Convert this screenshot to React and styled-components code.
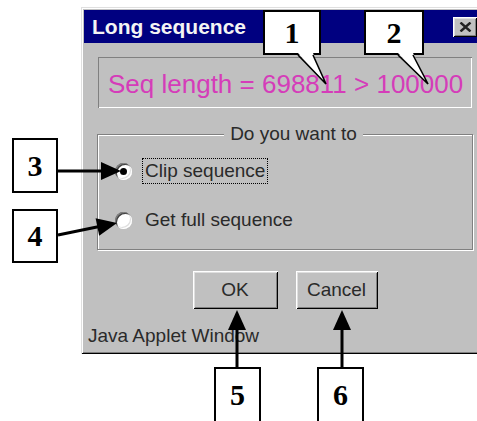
import styled, { createGlobalStyle } from "styled-components";

const GlobalStyle = createGlobalStyle`
  body {
    margin: 0;
    background: #fff;
  }
`;

const raised = `
  box-shadow: inset 1px 1px 0 #fff, inset -1px -1px 0 #000,
    inset 2px 2px 0 #dfdfdf, inset -2px -2px 0 #808080;
`;

const Arrow = ({ from, to, head = 20, half = 9 }) => {
  const dx = to[0] - from[0];
  const dy = to[1] - from[1];
  const len = Math.sqrt(dx * dx + dy * dy);
  const angle = (Math.atan2(dy, dx) * 180) / Math.PI;
  return (
    <g transform={`translate(${to[0]} ${to[1]}) rotate(${angle})`}>
      <line x1={-len} y1="0" x2={-head + 2} y2="0" stroke="#000" strokeWidth="3" />
      <polygon points={`0,0 ${-head},${-half} ${-head},${half}`} fill="#000" />
    </g>
  );
};

const Tail = ({ left, right, tip, y }) => (
  <g>
    <polygon points={`${left},${y - 2} ${right},${y - 2} ${tip[0]},${tip[1]}`} fill="#fff" />
    <polyline
      points={`${left},${y} ${tip[0]},${tip[1]} ${right},${y}`}
      fill="none"
      stroke="#000"
      strokeWidth="1.6"
    />
  </g>
);

const App = () => {
  return (
    <Page>
      <GlobalStyle />
      <Window>
        <TitleBar>
          <Title>Long sequence</Title>
          <CloseButton>
            <svg width="13" height="10" viewBox="0 0 13 10">
              <path d="M1.5 0.5 L11.5 9.5 M11.5 0.5 L1.5 9.5" stroke="#222" strokeWidth="2.4" />
            </svg>
          </CloseButton>
        </TitleBar>
        <Body>
          <MessageField>Seq length = 698811 &gt; 100000</MessageField>
          <Group>
            <Legend>Do you want to</Legend>
            <Options>
              <Option>
                <Radio $checked />
                <OptionLabel $focused>Clip sequence</OptionLabel>
              </Option>
              <Option>
                <Radio />
                <OptionLabel>Get full sequence</OptionLabel>
              </Option>
            </Options>
          </Group>
          <ButtonRow>
            <Button $w={85}>OK</Button>
            <Button $w={82}>Cancel</Button>
          </ButtonRow>
          <Footer>Java Applet Window</Footer>
        </Body>
      </Window>

      <Callout $x={263} $y={10} $w={58} $h={45}>1</Callout>
      <Callout $x={364} $y={10} $w={60} $h={45}>2</Callout>
      <Callout $x={12} $y={138} $w={46} $h={55}>3</Callout>
      <Callout $x={12} $y={209} $w={46} $h={54}>4</Callout>
      <Callout $x={214} $y={367} $w={47} $h={56}>5</Callout>
      <Callout $x={317} $y={367} $w={47} $h={56}>6</Callout>

      <Marks width="477" height="421" viewBox="0 0 477 421">
        <Tail left={298} right={313} tip={[326, 84]} y={55} />
        <Tail left={398} right={413} tip={[428, 84]} y={55} />
        <Arrow from={[58, 171]} to={[121, 171]} />
        <Arrow from={[58, 235]} to={[117, 223]} />
        <Arrow from={[237, 367]} to={[237, 310]} />
        <Arrow from={[342, 367]} to={[342, 310]} />
      </Marks>
    </Page>
  );
};

const Page = styled.div`
  position: relative;
  width: 477px;
  height: 421px;
  overflow: hidden;
  box-sizing: border-box;
  padding: 7px 0 0 81px;
  background: #fff;
  font-family: "Liberation Sans", Arial, sans-serif;
`;

const Window = styled.div`
  width: 400px;
  height: 347px;
  box-sizing: border-box;
  padding: 3px;
  display: flex;
  flex-direction: column;
  background: #c0c0c0;
  box-shadow: inset 1px 1px 0 #dfdfdf, inset -1px -1px 0 #000,
    inset 2px 2px 0 #fff, inset -2px -2px 0 #808080;
`;

const TitleBar = styled.div`
  height: 33px;
  display: flex;
  align-items: center;
  justify-content: space-between;
  padding: 0 1px 0 8px;
  background: #000080;
`;

const Title = styled.span`
  color: #f4f4f4;
  font-weight: bold;
  font-size: 21px;
`;

const CloseButton = styled.div`
  width: 24px;
  height: 20px;
  display: flex;
  align-items: center;
  justify-content: center;
  background: #c0c0c0;
  ${raised}
`;

const Body = styled.div`
  display: flex;
  flex-direction: column;
  align-items: flex-start;
  color: #2a2a2a;
  font-size: 19px;
`;

const MessageField = styled.div`
  width: 374px;
  height: 51px;
  box-sizing: border-box;
  margin: 14px 0 0 14px;
  padding: 3px 0 0 10px;
  display: flex;
  align-items: center;
  color: #d53cb9;
  font-size: 26px;
  box-shadow: inset 1px 1px 0 #808080, inset -1px -1px 0 #fff;
`;

const Group = styled.fieldset`
  width: 376px;
  box-sizing: border-box;
  margin: 15px 0 0 13px;
  padding: 13px 0 16px 17px;
  border: 1px solid #808080;
  box-shadow: 1px 1px 0 #fff, inset 1px 1px 0 #fff;
`;

const Legend = styled.legend`
  margin: 0 auto;
  padding: 0 6px;
  line-height: 22px;
  background: #c0c0c0;
`;

const Options = styled.div`
  display: flex;
  flex-direction: column;
  gap: 23px;
`;

const Option = styled.div`
  height: 26px;
  display: flex;
  align-items: center;
  gap: 10px;
`;

const Radio = styled.span`
  position: relative;
  width: 17px;
  height: 17px;
  border-radius: 50%;
  background: #fff;
  box-shadow: inset 1px 1px 0 #808080, inset -1px -1px 0 #fff,
    inset 2px 2px 0 #404040, inset -2px -2px 0 #dfdfdf;

  &::after {
    content: "";
    display: ${(p) => (p.$checked ? "block" : "none")};
    position: absolute;
    left: 5px;
    top: 5px;
    width: 7px;
    height: 7px;
    border-radius: 50%;
    background: #000;
  }
`;

const OptionLabel = styled.span`
  padding: 1px 2px;
  line-height: 22px;
  border: 1px dotted ${(p) => (p.$focused ? "#000" : "transparent")};
`;

const ButtonRow = styled.div`
  width: 376px;
  margin: 21px 0 0 13px;
  display: flex;
  justify-content: center;
  gap: 18px;
`;

const Button = styled.div`
  width: ${(p) => p.$w}px;
  height: 38px;
  display: flex;
  align-items: center;
  justify-content: center;
  background: #c0c0c0;
  ${raised}
`;

const Footer = styled.div`
  margin: 16px 0 0 4px;
  line-height: 22px;
`;

const Callout = styled.div`
  position: absolute;
  left: ${(p) => p.$x}px;
  top: ${(p) => p.$y}px;
  width: ${(p) => p.$w}px;
  height: ${(p) => p.$h}px;
  box-sizing: border-box;
  display: flex;
  align-items: center;
  justify-content: center;
  background: #fff;
  border: 2px solid #000;
  font-family: "Liberation Serif", "Times New Roman", serif;
  font-weight: bold;
  font-size: 30px;
  color: #000;
`;

const Marks = styled.svg`
  position: absolute;
  left: 0;
  top: 0;
  pointer-events: none;
`;

export default App;
